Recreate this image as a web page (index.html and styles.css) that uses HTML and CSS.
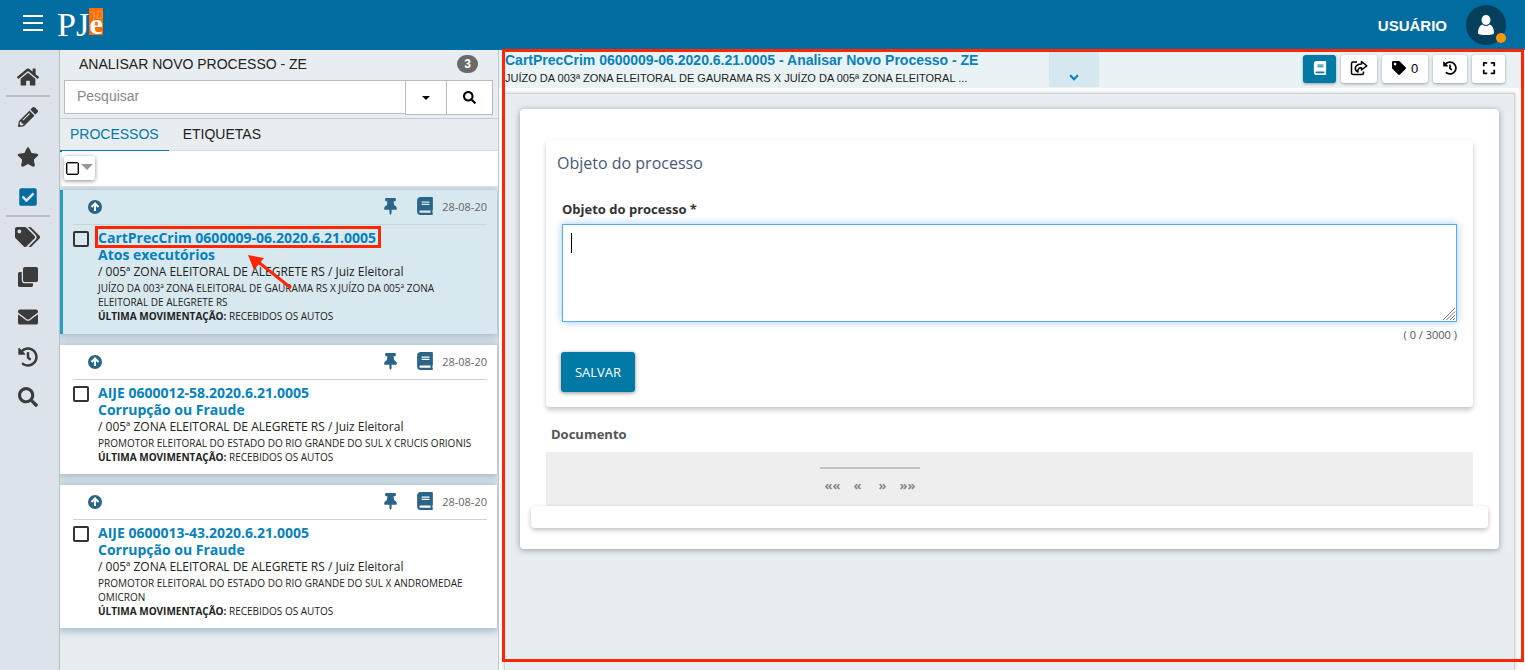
FILE: index.html
```html
<!DOCTYPE html>
<html lang="pt-BR">
<head>
<meta charset="utf-8">
<meta name="viewport" content="width=device-width, initial-scale=1">
<title>PJe - Analisar Novo Processo</title>
<link rel="stylesheet" href="styles.css">
</head>
<body>
<svg class="sprite" aria-hidden="true">
  <symbol id="i-home" viewBox="0 0 576 512"><path d="M280.37 148.26L96 300.11V464a16 16 0 0 0 16 16l112.06-.29a16 16 0 0 0 15.92-16V368a16 16 0 0 1 16-16h64a16 16 0 0 1 16 16v95.64a16 16 0 0 0 16 16.05L464 480a16 16 0 0 0 16-16V300L295.67 148.26a12.19 12.19 0 0 0-15.3 0zM571.6 251.47L488 182.56V44.05a12 12 0 0 0-12-12h-56a12 12 0 0 0-12 12v72.61L318.47 43a48 48 0 0 0-61 0L4.34 251.47a12 12 0 0 0-1.6 16.9l25.5 31A12 12 0 0 0 45.15 301l235.22-193.74a12.19 12.19 0 0 1 15.3 0L530.9 301a12 12 0 0 0 16.9-1.6l25.5-31a12 12 0 0 0-1.7-16.93z"/></symbol>
  <symbol id="i-pencil" viewBox="0 0 512 512"><path d="M497.9 142.1l-46.1 46.1c-4.7 4.7-12.3 4.7-17 0l-111-111c-4.7-4.7-4.7-12.3 0-17l46.1-46.1c18.7-18.7 49.1-18.7 67.9 0l60.1 60.1c18.8 18.7 18.8 49.1 0 67.9zM284.2 99.8L21.6 362.4.4 483.9c-2.9 16.4 11.4 30.6 27.8 27.8l121.5-21.3 262.6-262.6c4.7-4.7 4.7-12.3 0-17l-111-111c-4.8-4.7-12.4-4.7-17.1 0zM124.1 339.9c-5.5-5.5-5.5-14.3 0-19.8l154-154c5.5-5.5 14.3-5.5 19.8 0s5.5 14.3 0 19.8l-154 154c-5.5 5.5-14.3 5.5-19.8 0zM88 424h48v36.3l-64.5 11.3-31.1-31.1L51.7 376H88v48z"/></symbol>
  <symbol id="i-star" viewBox="0 0 576 512"><path d="M259.3 17.8L194 150.2 47.9 171.5c-26.2 3.8-36.7 36.1-17.7 54.6l105.7 103-25 145.5c-4.5 26.3 23.2 46 46.4 33.7L288 439.6l130.7 68.7c23.2 12.2 50.9-7.4 46.4-33.7l-25-145.5 105.7-103c19-18.5 8.5-50.8-17.7-54.6L382 150.2 316.7 17.8c-11.7-23.6-45.6-23.9-57.4 0z"/></symbol>
  <symbol id="i-check" viewBox="0 0 448 512"><path d="M400 480H48c-26.51 0-48-21.49-48-48V80c0-26.51 21.49-48 48-48h352c26.51 0 48 21.49 48 48v352c0 26.51-21.49 48-48 48zm-204.686-98.059l184-184c6.248-6.248 6.248-16.379 0-22.627l-22.627-22.627c-6.248-6.248-16.379-6.249-22.628 0L184 302.745l-70.059-70.059c-6.248-6.248-16.379-6.248-22.628 0l-22.627 22.627c-6.248 6.248-6.248 16.379 0 22.627l104 104c6.249 6.25 16.379 6.25 22.628.001z"/></symbol>
  <symbol id="i-tags" viewBox="0 0 640 512"><path d="M497.941 225.941L286.059 14.059A48 48 0 0 0 252.118 0H48C21.49 0 0 21.49 0 48v204.118a48 48 0 0 0 14.059 33.941l211.882 211.882c18.744 18.745 49.136 18.746 67.882 0l204.118-204.118c18.745-18.745 18.745-49.137 0-67.882zM112 160c-26.51 0-48-21.49-48-48s21.49-48 48-48 48 21.49 48 48-21.49 48-48 48zm513.941 133.823L421.823 497.941c-18.745 18.745-49.137 18.745-67.882 0l-.36-.36L527.64 323.522c16.999-16.999 26.36-39.6 26.36-63.64s-9.362-46.641-26.36-63.64L331.397 0h48.721a48 48 0 0 1 33.941 14.059l211.882 211.882c18.745 18.745 18.745 49.137 0 67.882z"/></symbol>
  <symbol id="i-tag" viewBox="0 0 512 512"><path d="M497.941 225.941L286.059 14.059A48 48 0 0 0 252.118 0H48C21.49 0 0 21.49 0 48v204.118a48 48 0 0 0 14.059 33.941l211.882 211.882c18.744 18.745 49.136 18.746 67.882 0l204.118-204.118c18.745-18.745 18.745-49.137 0-67.882zM112 160c-26.51 0-48-21.49-48-48s21.49-48 48-48 48 21.49 48 48-21.49 48-48 48z"/></symbol>
  <symbol id="i-clone" viewBox="0 0 512 512"><path d="M464 0c26.51 0 48 21.49 48 48v288c0 26.51-21.49 48-48 48H176c-26.51 0-48-21.49-48-48V48c0-26.51 21.49-48 48-48h288M176 416c-44.112 0-80-35.888-80-80V128H48c-26.51 0-48 21.49-48 48v288c0 26.51 21.49 48 48 48h288c26.51 0 48-21.49 48-48v-48H176z"/></symbol>
  <symbol id="i-mail" viewBox="0 0 512 512"><path d="M502.3 190.8c3.9-3.1 9.7-.2 9.7 4.7V400c0 26.5-21.5 48-48 48H48c-26.5 0-48-21.5-48-48V195.6c0-5 5.7-7.8 9.7-4.7 22.4 17.4 52.1 39.5 154.1 113.6 21.1 15.4 56.7 47.8 92.2 47.6 35.7.3 72-32.8 92.3-47.6 102-74.1 131.6-96.3 154-113.7zM256 320c23.2.4 56.6-29.2 73.4-41.4 132.7-96.3 142.8-104.7 173.4-128.7 5.8-4.5 9.2-11.5 9.2-18.9v-19c0-26.5-21.5-48-48-48H48c-26.5 0-48 21.5-48 48v19c0 7.4 3.4 14.3 9.2 18.9 30.6 23.9 40.7 32.4 173.4 128.7 16.8 12.2 50.2 41.8 73.4 41.4z"/></symbol>
  <symbol id="i-history" viewBox="0 0 512 512"><path d="M504 255.531c.253 136.64-111.18 248.372-247.82 248.468-59.015.042-113.223-20.53-155.822-54.911-11.077-8.94-11.905-25.541-1.839-35.607l11.267-11.267c8.609-8.609 22.353-9.551 31.891-1.984C173.062 425.135 212.781 440 256 440c101.705 0 184-82.311 184-184 0-101.705-82.311-184-184-184-48.814 0-93.149 18.969-126.068 49.932l50.754 50.754c10.08 10.08 2.941 27.314-11.313 27.314H24c-8.837 0-16-7.163-16-16V38.627c0-14.254 17.234-21.393 27.314-11.314l49.372 49.372C129.209 34.136 189.552 8 256 8c136.81 0 247.747 110.78 248 247.531zm-180.912 78.784l9.823-12.63c8.138-10.463 6.253-25.542-4.21-33.679L288 256.349V152c0-13.255-10.745-24-24-24h-16c-13.255 0-24 10.745-24 24v135.651l65.409 50.874c10.463 8.137 25.541 6.253 33.679-4.21z"/></symbol>
  <symbol id="i-search" viewBox="0 0 512 512"><path d="M505 442.7L405.3 343c-4.5-4.5-10.6-7-17-7H372c27.6-35.3 44-79.7 44-128C416 93.1 322.9 0 208 0S0 93.1 0 208s93.1 208 208 208c48.3 0 92.7-16.4 128-44v16.3c0 6.4 2.5 12.5 7 17l99.7 99.7c9.4 9.4 24.6 9.4 33.9 0l28.3-28.3c9.4-9.4 9.4-24.6.1-34zM208 336c-70.7 0-128-57.2-128-128 0-70.7 57.2-128 128-128 70.7 0 128 57.2 128 128 0 70.7-57.2 128-128 128z"/></symbol>
  <symbol id="i-up" viewBox="0 0 14 14"><circle cx="7" cy="7" r="7"/><path class="cut" d="M7 11V4M3.5 7L7 3.5 10.5 7"/></symbol>
  <symbol id="i-pin" viewBox="0 0 384 512"><path d="M298.028 214.267L285.793 96H328c13.255 0 24-10.745 24-24V24c0-13.255-10.745-24-24-24H56C42.745 0 32 10.745 32 24v48c0 13.255 10.745 24 24 24h42.207L85.972 214.267C37.465 236.82 0 277.261 0 328c0 13.255 10.745 24 24 24h136v104.007c0 1.242.289 2.467.845 3.578l24 48c2.941 5.882 11.364 5.893 14.311 0l24-48a8.008 8.008 0 0 0 .845-3.578V352h136c13.255 0 24-10.745 24-24-.001-51.183-37.983-91.42-85.973-113.733z"/></symbol>
  <symbol id="i-book" viewBox="0 0 448 512"><path d="M448 360V24c0-13.3-10.7-24-24-24H96C43 0 0 43 0 96v320c0 53 43 96 96 96h328c13.3 0 24-10.7 24-24v-16c0-7.5-3.5-14.3-8.9-18.7-4.2-15.4-4.2-59.3 0-74.7 5.4-4.3 8.9-11.1 8.9-18.6zM128 134c0-3.3 2.7-6 6-6h212c3.3 0 6 2.7 6 6v20c0 3.3-2.7 6-6 6H134c-3.3 0-6-2.7-6-6v-20zm0 64c0-3.3 2.7-6 6-6h212c3.3 0 6 2.7 6 6v20c0 3.3-2.7 6-6 6H134c-3.3 0-6-2.7-6-6v-20zm253.4 250H96c-17.7 0-32-14.3-32-32 0-17.6 14.4-32 32-32h285.4c-1.9 17.1-1.9 46.9 0 64z"/></symbol>
  <symbol id="i-share" viewBox="0 0 18 16"><path class="line" d="M7 2H3Q1.500 2 1.500 3.500V13Q1.500 14.500 3 14.500H12Q13.500 14.500 13.500 13V11.500"/><path class="line" d="M11.500 1.500L16.800 5.800 11.500 10V7.800Q7.500 7.500 8 12 5 10.500 5.300 8 6 4.200 11.500 4Z"/></symbol>
  <symbol id="i-expand" viewBox="0 0 448 512"><path d="M0 180V56c0-13.3 10.7-24 24-24h124c6.6 0 12 5.4 12 12v40c0 6.6-5.4 12-12 12H64v84c0 6.600-5.400 12-12 12H12c-6.600 0-12-5.400-12-12zM288 44v40c0 6.600 5.400 12 12 12h84v84c0 6.600 5.400 12 12 12h40c6.600 0 12-5.400 12-12V56c0-13.300-10.700-24-24-24H300c-6.600 0-12 5.400-12 12zm148 276h-40c-6.600 0-12 5.400-12 12v84h-84c-6.600 0-12 5.400-12 12v40c0 6.600 5.400 12 12 12h124c13.300 0 24-10.700 24-24V332c0-6.600-5.400-12-12-12zM160 468v-40c0-6.600-5.400-12-12-12H64v-84c0-6.600-5.400-12-12-12H12c-6.600 0-12 5.400-12 12v124c0 13.300 10.700 24 24 24h124c6.600 0 12-5.400 12-12z"/></symbol>
</svg>

<header class="topbar">
  <button class="menu" aria-label="Menu"><span></span><span></span><span></span></button>
  <a class="logo" href="#" aria-label="PJe"><span class="logo-pj">PJ</span><span class="logo-e"><svg viewBox="0 0 14 27" aria-hidden="true"><path d="M1 4H5V8H9V3H13V10H7M5 8V13"/></svg><b>e</b></span></a>
  <div class="user">
    <span>USUÁRIO</span>
    <button class="avatar" aria-label="Perfil"><svg viewBox="0 0 16 20"><ellipse cx="8" cy="5" rx="4.500" ry="5"/><path d="M4.500 9.500Q8 12.500 11.500 9.500Q16 11 16 18Q16 20 8 20T0 18Q0 11 4.500 9.500Z"/></svg><i class="status"></i></button>
  </div>
</header>

<div class="shell">
  <nav class="rail" aria-label="Principal">
    <a href="#" aria-label="Início"><svg class="wide"><use href="#i-home"/></svg></a>
    <hr>
    <a href="#" aria-label="Assinaturas"><svg><use href="#i-pencil"/></svg></a>
    <a href="#" aria-label="Favoritos"><svg class="wide"><use href="#i-star"/></svg></a>
    <a href="#" aria-label="Tarefas" class="on"><svg><use href="#i-check"/></svg></a>
    <hr>
    <a href="#" aria-label="Etiquetas"><svg class="tags"><use href="#i-tags"/></svg></a>
    <a href="#" aria-label="Cópias"><svg><use href="#i-clone"/></svg></a>
    <a href="#" aria-label="Mensagens"><svg><use href="#i-mail"/></svg></a>
    <a href="#" aria-label="Histórico"><svg><use href="#i-history"/></svg></a>
    <a href="#" aria-label="Pesquisa"><svg><use href="#i-search"/></svg></a>
  </nav>

  <section class="list">
    <div class="list-head"><h1>ANALISAR NOVO PROCESSO - ZE</h1><span class="count">3</span></div>
    <div class="search">
      <input type="text" placeholder="Pesquisar" aria-label="Pesquisar">
      <button class="drop" aria-label="Opções"><i class="caret"></i></button>
      <button class="go" aria-label="Buscar"><svg><use href="#i-search"/></svg></button>
    </div>
    <div class="tabs"><a href="#" class="active">PROCESSOS</a><a href="#">ETIQUETAS</a></div>
    <div class="select-bar"><div class="select-all"><input type="checkbox" aria-label="Selecionar todos"><button aria-label="Mais seleções"><i class="caret"></i></button></div></div>

    <div class="cards">
      <article class="case selected">
        <div class="case-top"><svg class="up"><use href="#i-up"/></svg><svg class="pin"><use href="#i-pin"/></svg><svg class="book"><use href="#i-book"/></svg><time>28-08-20</time></div>
        <div class="case-body">
          <input type="checkbox" aria-label="CartPrecCrim 0600009-06.2020.6.21.0005">
          <div>
            <a href="#" class="marked">CartPrecCrim 0600009-06.2020.6.21.0005</a><a href="#">Atos executórios</a>
            <p class="court">/ 005ª ZONA ELEITORAL DE ALEGRETE RS / Juiz Eleitoral</p>
            <p>JUÍZO DA 003ª ZONA ELEITORAL DE GAURAMA RS X JUÍZO DA 005ª ZONA ELEITORAL DE ALEGRETE RS</p>
            <p><b>ÚLTIMA MOVIMENTAÇÃO:</b> RECEBIDOS OS AUTOS</p>
          </div>
        </div>
        <svg class="arrow" viewBox="0 0 44 34" aria-hidden="true"><path d="M43 33L9 6" fill="none" stroke="#ff2600" stroke-width="3"/><path d="M0 0L16 3L6 15Z" fill="#ff2600"/></svg>
      </article>
      <article class="case">
        <div class="case-top"><svg class="up"><use href="#i-up"/></svg><svg class="pin"><use href="#i-pin"/></svg><svg class="book"><use href="#i-book"/></svg><time>28-08-20</time></div>
        <div class="case-body">
          <input type="checkbox" aria-label="AIJE 0600012-58.2020.6.21.0005">
          <div>
            <a href="#">AIJE 0600012-58.2020.6.21.0005</a><a href="#">Corrupção ou Fraude</a>
            <p class="court">/ 005ª ZONA ELEITORAL DE ALEGRETE RS / Juiz Eleitoral</p>
            <p>PROMOTOR ELEITORAL DO ESTADO DO RIO GRANDE DO SUL X CRUCIS ORIONIS</p>
            <p><b>ÚLTIMA MOVIMENTAÇÃO:</b> RECEBIDOS OS AUTOS</p>
          </div>
        </div>
      </article>
      <article class="case">
        <div class="case-top"><svg class="up"><use href="#i-up"/></svg><svg class="pin"><use href="#i-pin"/></svg><svg class="book"><use href="#i-book"/></svg><time>28-08-20</time></div>
        <div class="case-body">
          <input type="checkbox" aria-label="AIJE 0600013-43.2020.6.21.0005">
          <div>
            <a href="#">AIJE 0600013-43.2020.6.21.0005</a><a href="#">Corrupção ou Fraude</a>
            <p class="court">/ 005ª ZONA ELEITORAL DE ALEGRETE RS / Juiz Eleitoral</p>
            <p>PROMOTOR ELEITORAL DO ESTADO DO RIO GRANDE DO SUL X ANDROMEDAE OMICRON</p>
            <p><b>ÚLTIMA MOVIMENTAÇÃO:</b> RECEBIDOS OS AUTOS</p>
          </div>
        </div>
      </article>
    </div>
  </section>

  <main class="detail">
    <div class="detail-head">
      <div class="detail-title">
        <a href="#">CartPrecCrim 0600009-06.2020.6.21.0005 - Analisar Novo Processo - ZE</a>
        <p>JUÍZO DA 003ª ZONA ELEITORAL DE GAURAMA RS X JUÍZO DA 005ª ZONA ELEITORAL ...</p>
      </div>
      <button class="more" aria-label="Mais detalhes"><svg viewBox="0 0 9 6"><path d="M1 1L4.500 4.500L8 1"/></svg></button>
      <div class="tools">
        <button class="primary" aria-label="Autos"><svg class="t-book"><use href="#i-book"/></svg></button>
        <button aria-label="Encaminhar" class="w36"><svg class="t-share"><use href="#i-share"/></svg></button>
        <button aria-label="Etiquetas" class="w46"><svg><use href="#i-tag"/></svg><span>0</span></button>
        <button aria-label="Histórico" class="w34"><svg><use href="#i-history"/></svg></button>
        <button aria-label="Tela cheia"><svg><use href="#i-expand"/></svg></button>
      </div>
    </div>
    <div class="canvas">
      <div class="sheet">
        <form class="panel">
          <h2>Objeto do processo</h2>
          <label for="objeto">Objeto do processo *</label>
          <div class="field"><textarea id="objeto"></textarea><i class="cursor"></i><svg class="grip" viewBox="0 0 14 14" aria-hidden="true"><path d="M1 13L13 1M4.500 13L13 4.500M8 13L13 8M11 13L13 11"/></svg></div>
          <p class="counter">( 0 / 3000 )</p>
          <button type="button" class="save">SALVAR</button>
        </form>
        <h3>Documento</h3>
        <div class="docs">
          <div class="pager"><button>««</button><button>«</button><button>»</button><button>»»</button></div>
        </div>
        <div class="footer-bar"></div>
      </div>
    </div>
    <div class="frame" aria-hidden="true"></div>
  </main>
</div>
</body>
</html>
```
FILE: styles.css
```css
* { box-sizing: border-box; }
body {
  margin: 0;
  height: 100vh;
  display: flex;
  flex-direction: column;
  overflow: hidden;
  font-family: "Open Sans", sans-serif;
  color: #222;
  background: #e8edf1;
}
h1, h2, h3, p { margin: 0; }
a { text-decoration: none; color: inherit; }
button { font: inherit; padding: 0; border: 0; background: none; }
svg { fill: currentColor; flex: none; display: block; }
.sprite { position: absolute; width: 0; height: 0; }
.cut { fill: none; stroke: #fff; stroke-width: 2; }
.line { fill: none; stroke: currentColor; stroke-width: 1.5; stroke-linejoin: round; }

/* Top bar */
.topbar {
  height: 50px;
  flex: none;
  display: flex;
  align-items: center;
  padding: 0 19px 0 23px;
  background: #006ca0;
  color: #fff;
}
.menu { width: 20px; display: flex; flex-direction: column; gap: 5px; margin-right: 14px; padding-bottom: 4px; }
.menu span { height: 2px; background: #fff; }
.logo { display: flex; align-items: flex-start; padding-top: 8px; font-family: "Liberation Serif", serif; height: 50px; }
.logo-pj { font-size: 34px; line-height: 34px; }
.logo-e {
  position: relative;
  width: 14px;
  height: 27px;
  display: flex;
  align-items: flex-start;
  justify-content: center;
  background: #ff6c00;
}
.logo-e svg { position: absolute; inset: 0; fill: none; stroke: #ff9a4d; stroke-width: 1; }
.logo-e b { position: relative; font-size: 30px; line-height: 32px; }
.user { margin-left: auto; display: flex; align-items: center; gap: 19px; font: bold 15px "Liberation Sans", sans-serif; }
.avatar { position: relative; width: 40px; height: 40px; border-radius: 50%; background: #043f5c; color: #fff; display: grid; place-items: center; }
.avatar svg { width: 16px; height: 20px; }
.status { position: absolute; right: 0; bottom: 2px; width: 10px; height: 10px; border-radius: 50%; background: #ff9800; }

.shell { flex: 1; min-height: 0; display: flex; }

/* Icon rail */
.rail {
  flex: 0 0 60px;
  padding-top: 7px;
  border-right: 1px solid #b9bcc0;
  background: #dce3eb;
  color: #3b3b3b;
}
.rail a { display: grid; place-items: center; height: 40px; padding-right: 4px; }
.rail svg { width: 20px; height: 20px; }
.rail .wide { width: 22px; }
.rail .tags { width: 25px; }
.rail .on { color: #006ca0; }
.rail hr { width: 44px; height: 2px; margin: -2px 0 0 6px; border: 0; background: #bfc1c4; }

/* Process list */
.list { flex: 0 0 439px; min-width: 0; border-right: 1px solid #bdc9d2; background: #e8edf1; display: flex; flex-direction: column; }
.list-head { height: 30px; display: flex; align-items: center; justify-content: space-between; padding: 0 20px 2px 19px; }
.list-head h1 { font: 14px "Liberation Sans", sans-serif; }
.count { width: 21px; height: 18px; border-radius: 9px; background: #6a6a6a; color: #fff; font: bold 12px/18px "Liberation Sans", sans-serif; text-align: center; }
.search { display: flex; padding: 0 5px 3px 4px; height: 38px; }
.search input { flex: 1; min-width: 0; height: 34px; padding: 0 12px 2px; border: 1px solid #bbb; background: #fff; font: 14px "Liberation Sans", sans-serif; }
.search input::placeholder { color: #888; opacity: 1; }
.search button { height: 35px; display: grid; place-items: center; border: 1px solid #bbb; background: #fff; color: #000; margin-left: -1px; }
.search .drop { width: 42px; }
.search .go { width: 47px; }
.search svg { width: 13px; height: 13px; }
.caret { display: block; border: 4px solid transparent; border-top-color: currentColor; border-bottom: 0; }
.tabs { display: flex; height: 33px; border-top: 1px solid #c3cfd8; border-bottom: 1px solid #d5dadf; font: 14px "Liberation Sans", sans-serif; }
.tabs a { padding: 7px 14px 0 14px; height: 33px; }
.tabs .active { padding: 7px 10px 0; color: #0079a5; border-bottom: 2px solid #0079a5; }
.select-bar { margin-left: 2px; padding: 5px 2px; height: 35px; background: #fff; }
.select-all { width: 31px; height: 24px; display: flex; align-items: center; gap: 2px; padding: 0 2px; border-radius: 2px; background: #fff; box-shadow: 0 1px 4px rgba(0, 0, 0, .45); }
input[type="checkbox"] { appearance: none; flex: none; margin: 0; border: 2px solid #333; border-radius: 2px; background: #fff; }
.select-all input { width: 13px; height: 13px; border: 1px solid #000; outline: 0; box-shadow: inset 0 0 0 1px rgba(0, 0, 0, .4); }
.select-all button { color: #999; padding-bottom: 2px; }
.select-all .caret { border-width: 6px; border-bottom: 0; }
.cards { flex: 1; display: flex; flex-direction: column; gap: 11px; padding: 4px 1px 0 0; overflow: hidden; }
.case { position: relative; flex: none; padding: 0 10px 10px 13px; background: #fff; box-shadow: 0 1px 8px 2px rgba(20, 90, 125, .35); }
.selected { background: #d7e8ef; border-left: 3px solid #269bc5; padding-left: 10px; padding-bottom: 11px; }
.case-top { display: flex; align-items: center; height: 35px; padding: 0 0 2px 15px; border-bottom: 1px solid #d0d3d6; color: #2a6486; }
.up { width: 14px; height: 14px; margin-right: auto; margin-top: 2px; }
.pin { width: 13px; height: 17px; }
.book { width: 16px; height: 18px; margin: 0 9px 0 20px; }
.case-top time { font-size: 11px; color: #666; }
.case-body { display: flex; gap: 9px; padding: 4px 8px 0 0; }
.case-body input { width: 16px; height: 16px; margin-top: 2px; background: none; }
.case-body a { position: relative; display: table; font-weight: bold; font-size: 14px; line-height: 17px; color: #0581bb; }
.marked::after { content: ""; position: absolute; inset: -3px -5px -2px -3px; border: 3px solid #ff2600; }
.case-body p { font-size: 10px; line-height: 14px; }
.case-body .court { font-size: 12px; line-height: 18px; }
.arrow { position: absolute; left: 185px; top: 65px; width: 44px; height: 34px; }

/* Detail area */
.detail { position: relative; flex: 1; min-width: 0; display: flex; flex-direction: column; background: #fff; }
.detail-head { height: 38px; flex: none; display: flex; padding-left: 6px; background: #e9f2f5; }
.detail-title { flex: 0 1 544px; min-width: 0; padding-top: 1px; font-family: "Liberation Sans", sans-serif; white-space: nowrap; overflow: hidden; }
.detail-title a { display: block; font-size: 14px; line-height: 18px; font-weight: bold; color: #0581bb; }
.detail-title p { font-size: 11px; line-height: 18px; }
.more { width: 50px; height: 35px; margin-top: 2px; padding-top: 16px; display: grid; place-items: center; background: #d6e8ef; color: #0581bb; }
.more svg { width: 10px; height: 7px; fill: none; stroke: currentColor; stroke-width: 2; }
.tools { margin-left: auto; display: flex; gap: 5px; padding: 5px 20px 0 0; }
.tools button { width: 33px; height: 28px; padding-bottom: 2px; display: flex; align-items: center; justify-content: center; gap: 5px; border-radius: 3px; background: #fff; color: #000; font: 13px "Liberation Sans", sans-serif; box-shadow: 0 1px 3px rgba(0, 0, 0, .35); }
.tools .w34 { width: 34px; }
.tools .w36 { width: 36px; }
.tools .w46 { width: 46px; }
.tools .primary { background: #0079a5; color: #fff; }
.tools svg { width: 14px; height: 14px; }
.tools .t-share { width: 18px; height: 16px; }
.canvas { flex: 1; margin: 5px 10px 0 5px; padding: 15px; border: 1px solid #d0d3d6; border-bottom: 0; background: #e8edf1; box-shadow: 0 0 5px rgba(0, 0, 0, .2); }
.sheet { padding: 31px 11px 21px; border-radius: 4px; background: #fff; box-shadow: 0 1px 6px rgba(0, 0, 0, .35); }
.panel { margin: 0 15px; padding: 12px 16px 15px; display: flex; flex-direction: column; border-radius: 4px; box-shadow: 0 3px 5px rgba(0, 0, 0, .22); }
.panel h2 { margin-left: -5px; font-size: 16px; line-height: 22px; font-weight: normal; color: #4a5775; }
.panel label { margin-top: 24px; font-size: 13px; line-height: 22px; font-weight: bold; color: #333; }
.field { position: relative; margin-top: 4px; }
.field textarea { display: block; width: 100%; height: 98px; padding: 8px; border: 1px solid #5ba8e8; background: #fff; font: inherit; outline: 0; resize: none; box-shadow: 0 0 8px rgba(91, 168, 232, .6); }
.cursor { position: absolute; left: 9px; top: 9px; width: 1px; height: 20px; background: #000; }
.grip { position: absolute; right: 1px; bottom: 1px; width: 14px; height: 14px; fill: none; stroke: #777; stroke-width: 1; }
.counter { margin-top: 5px; text-align: right; font-size: 11px; line-height: 16px; color: #555; }
.save { align-self: flex-start; margin: 9px 0 0 -1px; width: 74px; height: 40px; border-radius: 3px; background: #0079a5; color: #fff; font-size: 13px; box-shadow: 0 1px 4px rgba(0, 0, 0, .45); }
.sheet h3 { margin: 17px 20px 7px; font-size: 13px; line-height: 21px; color: #555; }
.docs { height: 54px; margin: 0 15px; padding: 15px 0 0 274px; background: #eee; }
.pager { width: 100px; height: 30px; display: flex; border-top: 2px solid #c2c2c2; }
.pager button { flex: 1; padding-top: 4px; font-size: 13px; font-weight: bold; color: #8a8a8a; }
.footer-bar { height: 22px; border-radius: 4px; background: #fff; box-shadow: 0 2px 5px rgba(0, 0, 0, .25); position: relative; }
.frame { position: absolute; inset: -1px 1px 8px 3px; border: 3px solid #ff2600; pointer-events: none; }
```
